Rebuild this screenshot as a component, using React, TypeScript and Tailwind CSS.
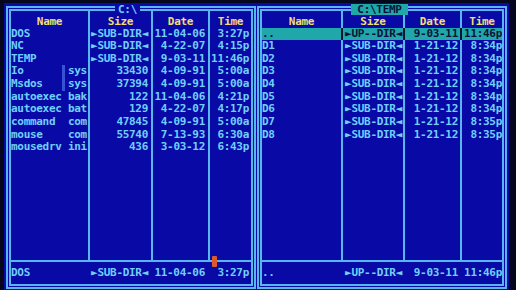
type Row = {
    name: string
    ext?: string
    size: string
    date: string
    time: string
    hi?: boolean
    mark?: boolean
}

type Cols = {
    name: string
    size: string
    date: string
    time: string
}

const SUB = '\u25BASUB-DIR\u25C4'
const UP = '\u25BAUP--DIR\u25C4'

const leftRows: Row[] = [
    {name: 'DOS', size: SUB, date: '11-04-06', time: '3:27p'},
    {name: 'NC', size: SUB, date: '4-22-07', time: '4:15p'},
    {name: 'TEMP', size: SUB, date: '9-03-11', time: '11:46p'},
    {name: 'Io', ext: 'sys', size: '33430', date: '4-09-91', time: '5:00a', mark: true},
    {name: 'Msdos', ext: 'sys', size: '37394', date: '4-09-91', time: '5:00a', mark: true},
    {name: 'autoexec', ext: 'bak', size: '122', date: '11-04-06', time: '4:21p'},
    {name: 'autoexec', ext: 'bat', size: '129', date: '4-22-07', time: '4:17p'},
    {name: 'command', ext: 'com', size: '47845', date: '4-09-91', time: '5:00a'},
    {name: 'mouse', ext: 'com', size: '55740', date: '7-13-93', time: '6:30a'},
    {name: 'mousedrv', ext: 'ini', size: '436', date: '3-03-12', time: '6:43p'},
]

const rightRows: Row[] = [
    {name: '..', size: UP, date: '9-03-11', time: '11:46p', hi: true},
    {name: 'D1', size: SUB, date: '1-21-12', time: '8:34p'},
    {name: 'D2', size: SUB, date: '1-21-12', time: '8:34p'},
    {name: 'D3', size: SUB, date: '1-21-12', time: '8:34p'},
    {name: 'D4', size: SUB, date: '1-21-12', time: '8:34p'},
    {name: 'D5', size: SUB, date: '1-21-12', time: '8:34p'},
    {name: 'D6', size: SUB, date: '1-21-12', time: '8:34p'},
    {name: 'D7', size: SUB, date: '1-21-12', time: '8:35p'},
    {name: 'D8', size: SUB, date: '1-21-12', time: '8:35p'},
]

const leftCols: Cols = {
    name: 'w-[79px] shrink-0',
    size: 'w-[63px] shrink-0 pr-[3px]',
    date: 'w-[57px] shrink-0 pr-[3px]',
    time: 'flex-1 pr-[2px]',
}

const rightCols: Cols = {
    name: 'w-[81px] shrink-0',
    size: 'w-[62px] shrink-0 pr-[1px]',
    date: 'w-[57px] shrink-0 pr-[2px]',
    time: 'flex-1',
}

function FileRow({row, cols}: { row?: Row; cols: Cols }) {
    const line = row?.hi ? 'border-[#0b1238]' : 'border-[#58b6ee]'
    return (
        <div className={`flex h-[12.65px] leading-[12.65px] ${row?.hi ? 'bg-[#1fa7a9] text-[#0b1238]' : ''}`}>
            <div className={`${cols.name} relative border-r-2 ${line} whitespace-pre`}>
                {row ? (row.ext ? row.name.padEnd(9) + row.ext : row.name) : ''}
                {row?.mark && <span className="absolute left-[51px] top-0 h-full w-[3px] bg-[#3752d2]"/>}
            </div>
            <div className={`${cols.size} border-r-2 ${line} text-right whitespace-pre`}>{row?.size}</div>
            <div className={`${cols.date} border-r-2 ${line} text-right`}>{row?.date}</div>
            <div className={`${cols.time} text-right`}>{row?.time}</div>
        </div>
    )
}

function Panel({title, titleClass, rows, cols}: {
    title: string
    titleClass: string
    rows: Row[]
    cols: Cols
}) {
    const filled: (Row | undefined)[] = Array.from({length: 18}, (_, i) => rows[i])
    const foot = rows[0]
    return (
        <div className="relative flex w-[250px] h-[283.3px] flex-col border-[5px] border-double border-[#58b6ee]">
            <div className={`absolute top-[-7px] h-[11px] leading-[11px] text-center ${titleClass}`}>{title}</div>
            <div className="flex h-[16.5px] items-end leading-[11px] text-[#f1df72]">
                <div className={`${cols.name} h-full border-r-2 border-[#58b6ee] flex items-end justify-center pb-[0.8px]`}>Name</div>
                <div className={`${cols.size} !pr-0 h-full border-r-2 border-[#58b6ee] flex items-end justify-center pb-[0.8px]`}>Size</div>
                <div className={`${cols.date} !pr-0 h-full border-r-2 border-[#58b6ee] flex items-end justify-center pb-[0.8px]`}>Date</div>
                <div className={`${cols.time} !pr-0 h-full flex items-end justify-center pb-[0.8px]`}>Time</div>
            </div>
            {filled.map((r, i) => <FileRow key={i} row={r} cols={cols}/>)}
            <div className="flex h-[5.3px]">
                <div className={`${cols.name} border-r-2 border-[#58b6ee]`}/>
                <div className={`${cols.size} border-r-2 border-[#58b6ee]`}/>
                <div className={`${cols.date} border-r-2 border-[#58b6ee]`}/>
                <div className={cols.time}/>
            </div>
            <div className="flex flex-1 items-center border-t-2 border-[#58b6ee] leading-[12.65px]">
                <div className={`${cols.name} border-r-2 border-transparent whitespace-pre`}>
                    {foot.ext ? foot.name.padEnd(9) + foot.ext : foot.name}
                </div>
                <div className={`${cols.size} border-r-2 border-transparent text-right`}>{foot.size}</div>
                <div className={`${cols.date} border-r-2 border-transparent text-right`}>{foot.date}</div>
                <div className={`${cols.time} text-right`}>{foot.time}</div>
            </div>
        </div>
    )
}

export default function App() {
    return (
        <div className="relative w-[516px] h-[290px] overflow-hidden bg-[#06061c] pl-[4px] pt-[3px] font-['DejaVu_Sans_Mono',monospace] text-[11px] tracking-[-0.3px] font-bold text-[#6fd0fa]">
            <div className="flex w-[505px] h-[287px] gap-[1px] bg-[#0909a6] px-[2px] pt-[3px]">
                <Panel
                    title="C:\"
                    titleClass="left-[104px] w-[25px] bg-[#0909a6] text-[#6fd0fa]"
                    rows={leftRows}
                    cols={leftCols}
                />
                <Panel
                    title="C:\TEMP"
                    titleClass="left-[89px] w-[57px] bg-[#1fa7a9] text-[#0b1238]"
                    rows={rightRows}
                    cols={rightCols}
                />
            </div>
            <div className="absolute left-[212px] top-[256px] h-[11px] w-[5px] rounded-[1px] bg-[#dc5a2a]"/>
        </div>
    )
}
